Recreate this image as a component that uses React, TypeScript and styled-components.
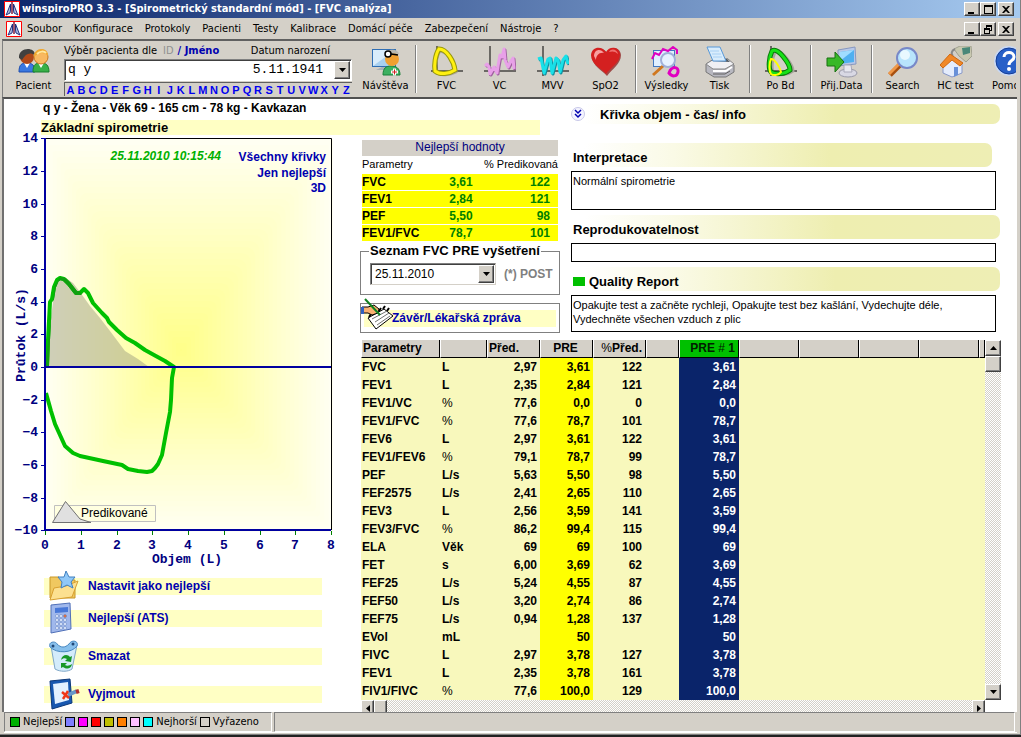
import React from "react";
import styled, { createGlobalStyle, css } from "styled-components";

const sans = `"Liberation Sans", Arial, sans-serif`;
const ui = `"DejaVu Sans Condensed", Tahoma, "DejaVu Sans", sans-serif`;
const mono = `"Liberation Mono", "Courier New", monospace`;
const face = "#d4d0c8";
const link = "#0000b0";

const GlobalStyle = createGlobalStyle`
  *, *::before, *::after { box-sizing: border-box; }
  body { margin: 0; background: #222; font: 12px/14px ${sans}; color: #000; }
  button, input, textarea, select { font: inherit; color: inherit; margin: 0; }
  button { cursor: pointer; }
`;

const raised = css`
  border: 1px solid;
  border-color: #fff #404040 #404040 #fff;
  box-shadow: inset -1px -1px 0 #808080;
  background: ${face};
`;

const Window = styled.div`
  display: flex;
  flex-direction: column;
  min-height: calc(100vh - 2px);
  background: ${face};
  border-right: 1px solid #808080;
  border-bottom: 1px solid #808080;
`;

const TitleBar = styled.header`
  display: flex;
  align-items: center;
  gap: 2px;
  height: 18px;
  padding: 0 6px 0 4px;
  background: linear-gradient(90deg, #0a246a, #a6caf0);
  color: #fff;
`;

const Title = styled.h1`
  flex: 1;
  margin: 0;
  font: bold 11px/14px ${ui};
  white-space: nowrap;
`;

const MenuBar = styled.nav`
  display: flex;
  align-items: center;
  height: 21px;
  padding: 0 6px;
  font: 11px/14px ${ui};
`;

const MenuList = styled.div`
  display: flex;
  flex: 1;
  gap: 12px;
  padding-left: 5px;
`;

const MenuItem = styled.button`
  border: 0;
  padding: 0;
  background: none;
  white-space: nowrap;
`;

const WindowButtons = styled.div`
  display: flex;
`;

const WindowButton = styled.button<{ $apart?: boolean }>`
  ${raised}
  width: 16px;
  height: 14px;
  padding: 0;
  margin-left: ${(p) => (p.$apart ? 2 : 0)}px;
  display: flex;
  color: #000;
`;

const Toolbar = styled.div`
  display: flex;
  height: 58px;
  margin: 0 4px 0 2px;
  padding-left: 4px;
  border-top: 2px solid #606060;
  border-left: 1px solid #808080;
  overflow: hidden;
  font: 11px/14px ${ui};
`;

const ToolButton = styled.button`
  display: flex;
  flex: none;
  flex-direction: column;
  align-items: center;
  gap: 1px;
  width: 53px;
  padding: 5px 0 0;
  border: 0;
  background: none;
  white-space: nowrap;
`;

const Separator = styled.span`
  flex: none;
  width: 2px;
  height: 48px;
  margin: 4px 3px;
  border-left: 1px solid #808080;
  border-right: 1px solid #fff;
`;

const PatientPicker = styled.div`
  flex: none;
  width: 288px;
  margin: 2px 7px 0 4px;
`;

const PickerLabels = styled.div`
  display: flex;
  height: 16px;
  align-items: center;
  white-space: nowrap;
`;

const PickerMode = styled.button<{ $active?: boolean }>`
  border: 0;
  padding: 0;
  background: none;
  margin-left: ${(p) => (p.$active ? 4 : 6)}px;
  color: ${(p) => (p.$active ? link : "#909090")};
  font-weight: ${(p) => (p.$active ? "bold" : "normal")};
`;

const BirthLabel = styled.label`
  margin-left: auto;
  padding-right: 22px;
`;

const Combo = styled.div`
  display: flex;
  height: 22px;
  padding: 1px;
  border: 1px solid;
  border-color: #808080 #fff #fff #808080;
  box-shadow: inset 1px 1px 0 #404040;
  background: #fff;
`;

const ComboInput = styled.input<{ $right?: boolean }>`
  flex: 1;
  min-width: 0;
  border: 0;
  outline: 0;
  padding: 0 11px 0 2px;
  background: transparent;
  font: 13px/18px ${mono};
  text-align: ${(p) => (p.$right ? "right" : "left")};
`;

const ArrowButton = styled.button`
  ${raised}
  flex: none;
  display: flex;
  align-items: center;
  justify-content: center;
  width: 16px;
  height: 100%;
  padding: 0;
`;

const SelectArrow = styled.span`
  ${raised}
  flex: none;
  display: flex;
  align-items: center;
  justify-content: center;
  width: 16px;
  pointer-events: none;
`;

const Letters = styled.div`
  display: flex;
  height: 14px;
  margin-top: 1px;
  border-top: 1px solid #606060;
  border-left: 1px solid #606060;
`;

const Letter = styled.button`
  flex: 1;
  padding: 0;
  border: 0;
  background: none;
  color: #0000f0;
  font: bold 11px/12px ${sans};
`;

const Content = styled.main`
  flex: 1;
  display: grid;
  grid-template-columns: 356px 204px minmax(0, 1fr);
  grid-template-rows: 37px 205px 1fr;
  margin: 0 3px 0 2px;
  border-top: 2px solid #505050;
  border-left: 2px solid #707070;
  background: #fff;
`;

const Heading = styled.div`
  grid-column: 1 / 3;
  padding: 2px 24px 0 37px;
`;

const PatientLine = styled.p`
  margin: 0;
  padding-left: 2px;
  font: bold 12px/14px ${sans};
  height: 19px;
`;

const Band = styled.h2`
  margin: 0;
  height: 15px;
  background: #ffffc4;
  font: bold 13px/16px ${sans};
`;

const Left = styled.section`
  grid-column: 1;
  grid-row: 2 / 4;
`;

const ChartArea = styled.svg`
  display: block;
  overflow: visible;
`;

const Actions = styled.div`
  display: flex;
  flex-direction: column;
  padding: 4px 38px 0 40px;
`;

const Action = styled.button<{ $spaced?: boolean }>`
  display: flex;
  align-items: center;
  gap: 8px;
  height: 32px;
  margin-top: ${(p) => (p.$spaced ? 6 : 0)}px;
  padding: 0 0 0 4px;
  border: 0;
  background: linear-gradient(#ffffc4, #ffffc4) center / 100% 17px no-repeat;
  color: ${link};
  font: bold 12px/14px ${sans};
`;

const Center = styled.section`
  padding: 4px 5px 0 0;
`;

const BestTable = styled.table`
  width: 196px;
  margin-left: 2px;
  border-collapse: collapse;
  table-layout: fixed;

  caption { height: 16px; background: ${face}; color: #000080; font: 12px/15px ${sans}; }
  th { height: 17px; padding: 0; font: 11px/16px ${sans}; text-align: left; white-space: nowrap; }
  tbody th { width: 60px; font: bold 12px/16px ${sans}; }
  td { padding: 0; color: #008000; font: bold 12px/16px ${sans}; text-align: right; }
  tbody tr { height: 17px; background: #ff0; border-top: 1px solid #fff; }
  thead th:last-child { text-align: right; }
  tbody td:nth-child(2) { padding-right: 20px; }
  tbody td:last-child { padding-right: 8px; }
`;

const ExamBox = styled.fieldset`
  width: 200px;
  height: 51px;
  margin: 3px 0 0;
  padding: 5px 0 0 9px;
  border: 1px solid #808080;
  display: flex;

  legend { margin-left: -1px; padding: 0 1px; font: bold 13px/14px ${sans}; white-space: nowrap; }
`;

const ExamRow = styled.div`
  display: flex;
  align-items: center;
  gap: 8px;
  height: 22px;
`;

const SelectWrap = styled.div`
  display: flex;
  width: 126px;
  height: 22px;
  padding: 1px;
  border: 1px solid;
  border-color: #808080 #d4d0c8 #d4d0c8 #808080;
  box-shadow: inset 1px 1px 0 #404040;
`;

const Select = styled.select`
  flex: 1;
  min-width: 0;
  appearance: none;
  border: 0;
  padding: 0 0 0 3px;
  background: transparent;
  font: 12px/18px ${sans};
`;

const PostLabel = styled.span`
  color: #808080;
  font: bold 12px/14px ${sans};
`;

const ReportButton = styled.button`
  display: flex;
  align-items: center;
  width: 200px;
  height: 30px;
  margin-top: 8px;
  padding: 0 3px 0 0;
  border: 1px solid #808080;
  background: linear-gradient(#ffffc4, #ffffc4) center / calc(100% - 6px) 17px no-repeat #fff;
  color: ${link};
  font: bold 12px/14px ${sans};

  svg { flex: none; margin: -8px -1px 0 0; }
`;

const Right = styled.section`
  grid-column: 3;
  grid-row: 1 / 3;
  padding: 5px 21px 0 7px;
`;

const SectionHead = styled.h2<{ $intro?: boolean; $short?: boolean }>`
  display: flex;
  align-items: center;
  gap: ${(p) => (p.$intro ? 15 : 4)}px;
  height: ${(p) => (p.$intro ? 20 : 24)}px;
  margin: 0 ${(p) => (p.$short ? 4 : -4)}px ${(p) => (p.$intro ? 19 : 4)}px -4px;
  padding: ${(p) => (p.$intro ? "0" : "4px 0 0 6px")};
  border-radius: 0 7px 7px 0;
  background: linear-gradient(90deg, #fff 4%, #fafae6 25%, #eeeeb0 62%, #eeeeb4);
  font: bold 13px/15px ${sans};
`;

const RoundButton = styled.button`
  width: 14px;
  height: 16px;
  margin-left: 4px;
  padding: 0;
  border: 0;
  background: none;
  display: flex;
`;

const Flag = styled.span`
  width: 12px;
  height: 9px;
  background: #00c000;
`;

const Note = styled.textarea<{ $h: number }>`
  display: block;
  width: 100%;
  height: ${(p) => p.$h}px;
  margin-bottom: 5px;
  padding: 2px 1px;
  border: 1px solid #000;
  border-radius: 0;
  outline: 0;
  background: #fff;
  resize: none;
  overflow: hidden;
  font: 11px/14px ${sans};
`;

const GridBox = styled.section`
  grid-column: 2 / 4;
  display: grid;
  grid-template-columns: minmax(0, 1fr) 16px;
  grid-template-rows: 360px 12px;
  margin: -1px 16px 0 1px;
`;

const Results = styled.table`
  width: 100%;
  table-layout: fixed;
  border-collapse: separate;
  border-spacing: 0;
  background: #f8f8bc;
  font: bold 12px/17px ${sans};

  th, td { height: 18px; padding: 0 3px 0 1px; white-space: nowrap; overflow: hidden; }
  td { text-align: right; }
  tbody th { text-align: left; }
  thead th {
    background: ${face};
    border-bottom: 1px solid #000;
    border-right: 1px solid #000;
    border-left: 1px solid #fff;
  }
`;

const HeadCell = styled.th<{ $align?: string; $live?: boolean }>`
  && { text-align: ${(p) => p.$align || "left"}; }
  ${(p) => p.$live && css`&& { background: #00c000; color: #002000; }`}
`;

const Light = styled.span`
  font-weight: normal;
`;

const Unit = styled.td<{ $light?: boolean }>`
  && {
    text-align: left;
    padding-left: 2px;
    font-weight: ${(p) => (p.$light ? "normal" : "bold")};
  }
`;

const Best = styled.td`
  background: #ff0;
`;

const Percent = styled.td`
  && { padding-right: 4px; }
`;

const Chosen = styled.td`
  background: #0a246a;
  color: #fff;
`;

const Track = styled.div<{ $row?: boolean }>`
  display: flex;
  flex-direction: ${(p) => (p.$row ? "row" : "column")};
  background: repeating-conic-gradient(#fff 0 25%, #d4d0c8 0 50%) 0 0 / 2px 2px;
  overflow: hidden;

  button { width: ${(p) => (p.$row ? 13 : 16)}px; height: 16px; }
`;

const Thumb = styled.button`
  ${raised}
  padding: 0;
`;

const Grow = styled.span`
  flex: 1;
`;

const StatusBar = styled.footer`
  display: flex;
  height: 21px;
  margin: 0 3px 1px 4px;
  border-bottom: 1px solid #fff;
`;

const StatusPanel = styled.div<{ $fill?: boolean }>`
  flex: ${(p) => (p.$fill ? "1" : "none")};
  display: flex;
  align-items: center;
  width: ${(p) => (p.$fill ? "auto" : "268px")};
  margin-right: 2px;
  padding-left: 5px;
  border: 1px solid;
  border-color: #808080 #fff #fff #808080;
  font: 11px/14px ${ui};
`;

const Swatch = styled.i<{ $c: string }>`
  flex: none;
  width: 10px;
  height: 10px;
  margin-right: 3px;
  border: 1px solid #000;
  background: ${(p) => p.$c};
`;

const SwatchLabel = styled.span`
  margin-right: 3px;
`;

const Down = () => (
  <svg width="7" height="4"><path d="M0 0h7L3.500 4z" /></svg>
);

const Logo = () => (
  <svg width="16" height="16" viewBox="0 0 16 16">
    <path d="M.5.5h15v15H.5z" fill="#fff" stroke="#f00" />
    <path d="M8 1v12" stroke="#802040" strokeWidth="1.500" />
    <path d="M6.500 3L3 12l-1 2 4-2 .5-3zM9.500 3l3.500 9 1 2-4-2-.5-3z" fill="#b0c0e0" stroke="#203080" />
  </svg>
);

const glyphs: Record<string, string> = {
  min: "M3 9h6v2H3z",
  max: "M3 2h9v9H3zM4 4v6h7V4z",
  restore: "M5 2h6v6H9v3H3V5h2zM6 4v1h3v2h1V4zM4 7v3h4V7z",
  close: "M3 3h2l2 2 2-2h2L8 6.500 11 10H9L7 8l-2 2H3l3-3.500z",
};

const Controls = ({ mid, scope }: { mid: "max" | "restore"; scope: string }) => (
  <WindowButtons>
    {(["min", mid, "close"] as const).map((k) => (
      <WindowButton key={k} $apart={k === "close"} aria-label={`${scope} ${k}`}>
        <svg width="14" height="12" viewBox="0 0 14 12"><path d={glyphs[k]} fillRule="evenodd" /></svg>
      </WindowButton>
    ))}
  </WindowButtons>
);

const shadow = { fill: "none", stroke: "#a8a49c", strokeWidth: 3 };
const vcWave = "M1 20L3 18 5 21 6 28 10 21 13 27 14 20 16 9 18 11 20 3 21 14 24 21 27 15 29 12 30 23";
const mvvWave = "M1 13L4 12 7 27 11 13 13 12 15 27 19 12 21 14 23 26 26 14 29 10 31 18";
const pobdLoop = "M7 5c-3 6-4 18-1 21 5 3 14 2 19-2 0-6-12-23-18-19z";

const icons: Record<string, React.ReactNode> = {
  people: (
    <>
      <path d="M1 26c0-8 3-9 8-9s8 2 8 9z" fill="#3a78e0" stroke="#1c4cae" />
      <path d="M6 17l3 5 3-5z" fill="#fff" />
      <circle cx="9" cy="11" r="7" fill="#b04818" />
      <path d="M1 12C0 1 17 0 17 9 12 6 8 7 4 14z" fill="#404040" />
      <path d="M15 26c0-8 3-9 8-9s8 2 8 9z" fill="#38b048" stroke="#18802c" />
      <path d="M20 17l3 5 3-5z" fill="#fff" />
      <circle cx="23" cy="11" r="7" fill="#f8b860" stroke="#c87820" />
      <path d="M16 11C15 1 31 0 30 10 26 6 21 6 16 11z" fill="#f0a830" />
      <path d="M19 8c3-3 7-3 9-1" stroke="#ffe8a0" fill="none" strokeWidth="2" />
    </>
  ),
  visit: (
    <>
      <path d="M2 3h24v18H2z" fill="#2f6eb4" />
      <path d="M3 4h22v16H3z" fill="#d8ecfb" />
      <path d="M3 20L25 4v16z" fill="#a8d0f0" />
      <path d="M6 24h14l-4-3h-4z" fill="#a8b0b8" />
      <path d="M13 29c0-7 3-9 8-9s9 2 9 9z" fill="#3cb060" stroke="#188038" />
      <circle cx="22" cy="13" r="7" fill="#f0a030" />
      <path d="M15 11C14 2 28 2 29 8c-5-1-8-1-14 3z" fill="#b8b8b0" />
      <circle cx="18" cy="8" r="3" fill="#fff" stroke="#000" strokeWidth="1.500" />
      <path d="M21 8l7 1" stroke="#000" strokeWidth="1.500" />
      <path d="M21 26h7M24.500 22.500v7" stroke="#fff" strokeWidth="3" />
      <path d="M22 26h5M24.500 23.500v5" stroke="#d02020" />
    </>
  ),
  fvc: (
    <>
      <path d="M6 0v29M0 25h32" stroke="#000" />
      <path d="M9 5c-4 6-5 17-4 22 5 3 14 2 20-1-1-8-8-20-16-21z" {...shadow} />
      <path d="M8 3c-4 6-5 17-4 22 5 4 14 3 20-1-1-8-8-21-16-21z" fill="none" stroke="#98980c" strokeWidth="5" />
      <path d="M8 3c-4 6-5 17-4 22 5 4 14 3 20-1-1-8-8-21-16-21z" fill="none" stroke="#fff010" strokeWidth="3" />
    </>
  ),
  vc: (
    <>
      <path d="M6 0v30M0 25h32" stroke="#000" />
      <path d={vcWave} transform="translate(1 1)" fill="none" stroke="#a060a0" strokeWidth="3" strokeLinejoin="round" />
      <path d={vcWave} fill="none" stroke="#e8a0e8" strokeWidth="3" strokeLinejoin="round" />
    </>
  ),
  mvv: (
    <>
      <path d="M6 0v30M0 25h32" stroke="#000" />
      <path d={mvvWave} transform="translate(1 1)" fill="none" stroke="#1090a0" strokeWidth="3" strokeLinejoin="round" />
      <path d={mvvWave} fill="none" stroke="#18e0e8" strokeWidth="3" strokeLinejoin="round" />
    </>
  ),
  heart: (
    <>
      <path d="M17 30C12 24 2 20 2 10 3 1 13 0 17 7 20 0 30 0 31 9c0 9-9 14-14 21z" fill="#8a1010" opacity=".7" />
      <path d="M16 28C11 22 1 18 1 9 2 0 12 0 16 6 19 0 29 0 30 8c0 9-9 13-14 20z" fill="#d42020" />
      <path d="M4 10C4 3 11 2 14 7 9 6 6 10 6 14z" fill="#f8a0a0" />
      <path d="M19 6c2-4 8-3 9 2-3-3-6-3-9-2z" fill="#f07070" />
    </>
  ),
  results: (
    <>
      <path d="M2 4h22v17H2z" fill="#4078c0" />
      <path d="M3 5h20v15H3z" fill="#e0f0ff" />
      <path d="M1 13l3-6 4 2 4-6 5 2 5-4 4 3 0 4" fill="none" stroke="#e000c0" strokeWidth="2" />
      <path d="M18 27c3-8 10-6 9-1s-6 5-9 1z" fill="none" stroke="#e000c0" strokeWidth="3" />
      <path d="M2 29l10-9" stroke="#d07820" strokeWidth="3" />
      <circle cx="17" cy="14" r="7" fill="#e8f2ff" fillOpacity=".85" stroke="#a0b0d8" strokeWidth="2" />
    </>
  ),
  printer: (
    <>
      <path d="M2 18l8-5h14l6 6v7l-8 5H10l-8-5z" fill="#b8b8c0" stroke="#777" />
      <path d="M2 18l8-5h14l6 5-9 5H9z" fill="#f0f0f4" stroke="#888" />
      <path d="M7 15l4-2h12l3 3z" fill="#505860" />
      <path d="M3 1h13l6 14H9z" fill="#d8ecfc" stroke="#5898d8" />
      <path d="M6 5h9M8 8h9M9 11h9" stroke="#a8d0f4" />
      <path d="M9 25h13l6-4" stroke="#fff" strokeWidth="2" fill="none" />
      <path d="M9 28h12l5-3" stroke="#606060" fill="none" />
    </>
  ),
  pobd: (
    <>
      <path d="M6 0v30M0 25h32" stroke="#000" />
      <path d={pobdLoop} transform="translate(3 1)" {...shadow} />
      <path d={pobdLoop} fill="none" stroke="#087808" strokeWidth="5" />
      <path d={pobdLoop} fill="none" stroke="#18e018" strokeWidth="3" />
      <path d="M6 13c3-1 9 8 10 13-2 3-7 4-10 2-2-3-2-11 0-15z" fill="none" stroke="#ff0" strokeWidth="2" />
    </>
  ),
  receive: (
    <>
      <path d="M12 4l17-3 1 17-18 2z" fill="#b8c8e8" stroke="#8898c0" />
      <path d="M14 6l14-2 0 12-14 2z" fill="#50b0f0" />
      <path d="M14 6l14-2-14 11z" fill="#a0dcff" />
      <ellipse cx="22" cy="27" rx="9" ry="4" fill="#d8d8e4" stroke="#9898a8" />
      <path d="M18 19h7l1 7h-8z" fill="#e8e8f0" stroke="#a8a8b8" />
      <path d="M1 12h8V6l9 10-9 10v-6H1z" fill="#38b828" stroke="#187010" />
    </>
  ),
  search: (
    <>
      <path d="M3 29l12-12" stroke="#a85010" strokeWidth="5" />
      <path d="M2 28l12-12" stroke="#f09848" strokeWidth="3" />
      <circle cx="20" cy="12" r="10" fill="#b8e4fc" stroke="#7888c8" strokeWidth="2" />
      <circle cx="18" cy="9" r="5" fill="#e8f8ff" />
    </>
  ),
  house: (
    <>
      <path d="M14 3l6-3h11l1 10-6 6-7-6z" fill="#c8c8b0" stroke="#a0a090" />
      <path d="M22 2l8-1 0 6-7 2z" fill="#488878" />
      <path d="M15 3c-4 2-4 5-2 7" stroke="#888" strokeWidth="2" fill="none" />
      <path d="M3 18v9l9 4 10-4V17l-10-7z" fill="#e4ecfc" stroke="#8898c8" />
      <path d="M0 19L10 8l13 9-3 3-8-6-9 8z" fill="#f08828" stroke="#d06810" />
      <path d="M14 21h4v8l-4 2z" fill="#6890d8" />
    </>
  ),
  help: (
    <>
      <circle cx="16" cy="15" r="15" fill="#c8d8f4" />
      <circle cx="16" cy="15" r="13" fill="#2860c8" stroke="#123c98" />
      <path d="M11 11c0-6 10-6 10 0 0 4-5 3-5 8" fill="none" stroke="#fff" strokeWidth="3" />
      <circle cx="16" cy="23" r="2" fill="#fff" />
    </>
  ),
  folder: (
    <>
      <path d="M2 7h9l2 3h14v18H2z" fill="#f0c860" stroke="#c89828" />
      <path d="M2 30l4-12 12-2 12-5-6 16z" fill="#fce090" stroke="#d8a030" />
      <path d="M18 1l3 6 6 0-4 5 2 6-6-3-6 3 1-6-4-5 6 0z" fill="#90c8f8" stroke="#4080c0" />
    </>
  ),
  calc: (
    <>
      <path d="M3 3l19-2 1 26-20 4z" fill="#a0b8ec" stroke="#5070b8" />
      <path d="M7 6l13-1v5L7 11z" fill="#4878d8" />
      {[14, 18, 22, 26].map((y) => [9, 13, 17].map((x) => (
        <circle key={`${x}-${y}`} cx={x} cy={y} r="1.500" fill={x === 17 && y === 14 ? "#f07030" : "#e8f0ff"} stroke="#5878b8" strokeWidth=".5" />
      )))}
    </>
  ),
  bin: (
    <>
      <path d="M3 6l4 23c5 3 13 3 17 0l5-24c-6 7-18 8-26 1z" fill="#d4ecfb" stroke="#80a8c8" />
      <path d="M2 7C0 1 8 1 9 4c4 4 8 4 12 0 3-5 10-3 8 2-5 7-20 8-27 1z" fill="#88c0ec" stroke="#4888c0" />
      <circle cx="5" cy="6" r="1.500" fill="#204878" />
      <circle cx="25" cy="4" r="1.500" fill="#204878" />
      <path d="M13 20c1-6 7-6 9-3l2-1-1 6-6-1 2-2c-2-1-4-1-6 1zM24 24c-1 6-7 5-9 3l-2 1v-5h6l-2 2c2 1 4 1 7-1z" fill="#189828" />
    </>
  ),
  remove: (
    <>
      <path d="M2 3l20-2 2 24L4 31z" fill="#1858b0" stroke="#0c3878" />
      <path d="M5 6l15-2 1 18L7 26z" fill="#e4f2ff" />
      <path d="M20 17l9-4" stroke="#6898c8" strokeWidth="4" />
      <path d="M28 14l3-1" stroke="#b03030" strokeWidth="4" />
      <path d="M14 14l7 6M20 13l-5 8" stroke="#f03818" strokeWidth="2.500" />
    </>
  ),
};

const Icon = ({ name, size = 32 }: { name: string; size?: number }) => (
  <svg width={size} height={size} viewBox="0 0 32 32">{icons[name]}</svg>
);

const Tool = ({ icon, label }: { icon: string; label: string }) => (
  <ToolButton>
    <Icon name={icon} />
    <span>{label}</span>
  </ToolButton>
);

const menus = ["Soubor", "Konfigurace", "Protokoly", "Pacienti", "Testy", "Kalibrace", "Domácí péče", "Zabezpečení", "Nástroje", "?"];

const px = (v: number) => 45 + v * 35.75;
const py = (v: number) => 367 - v * 16.333;

const predictedArea = "M45 367L52 310 55 285 60 277 66 278 73 283 80 292 90 306 100 318 110 331 125 351 138 359 149 367z";
const flowCurve = "M47 366L48 340 50 302 52 299 54 287 57 280 60 278 64 279 69 284 76 293 80 293 84 289 88 293 93 303 102 313 107 318 109 322 117 330 126 338 135 343 145 350 154 355 165 361 174 367 172 378 171 400 170 412 166 433 162 455 158 464 155 468 152 471 147 472 138 471 128 469 122 465 103 461 80 456 73 453 65 446 60 435 55 424 51 411 46 393";

const glow = Array.from({ length: 36 }, (_, i) => {
  const t = i / 35;
  const k = 1 - t;
  const blue = Math.round(242 - 106 * t);
  return (
    <rect
      key={i}
      x={45 + 135 * t}
      y={139 + 210 * t}
      width={286 * k + 2}
      height={391 * k + 2}
      rx={40 * t * k}
      fill={`rgb(255,255,${blue})`}
    />
  );
});

const Chart = () => (
  <ChartArea width="336" height="430" viewBox="4 136 336 430" role="img" aria-label="Průtok (L/s) / Objem (L)">
    <defs><clipPath id="predicted"><path d={predictedArea} /></clipPath></defs>
    {glow}
    <path d={predictedArea} fill="#a0a080" fillOpacity=".5" />
    <path d="M45 138.500H331.500V530" fill="none" stroke="#000" />
    <path d={flowCurve} fill="none" stroke="#00c000" strokeWidth="4" strokeLinejoin="round" />
    <path d={flowCurve} fill="none" stroke="#10a010" strokeWidth="4" strokeLinejoin="round" clipPath="url(#predicted)" />
    <path d="M44 367H331M45 138V530H331" fill="none" stroke="#0000a0" strokeWidth="2" />
    {Array.from({ length: 13 }, (_, i) => 14 - i * 2).map((v) => (
      <g key={v}>
        <path d={`M41 ${Math.round(py(v)) + 0.5}h4`} stroke="#0000a0" />
        <text x="38" y={Math.round(py(v)) + 4} textAnchor="end" fill="#000080" fontFamily={mono} fontWeight="bold" fontSize="13">
          {String(v).replace("-", "−")}
        </text>
      </g>
    ))}
    {Array.from({ length: 9 }, (_, v) => (
      <g key={v}>
        <path d={`M${Math.round(px(v)) + 0.5} 531v4`} stroke="#008000" />
        <text x={Math.round(px(v))} y="549" textAnchor="middle" fill="#000080" fontFamily={mono} fontWeight="bold" fontSize="13">{v}</text>
      </g>
    ))}
    <text x="187" y="563" textAnchor="middle" fill="#000080" fontFamily={mono} fontWeight="bold" fontSize="13">Objem (L)</text>
    <text transform="translate(25 335) rotate(-90)" textAnchor="middle" fill="#000080" fontFamily={mono} fontWeight="bold" fontSize="13">Průtok (L/s)</text>
    <g fontFamily={sans} fontWeight="bold" fontSize="12" textAnchor="end">
      <text x="221" y="160" fill="#00b000" fontStyle="italic">25.11.2010 10:15:44</text>
      <text x="326" y="161" fill={link}>Všechny křivky</text>
      <text x="326" y="177" fill={link}>Jen nejlepší</text>
      <text x="326" y="192" fill={link}>3D</text>
    </g>
    <path d="M54.500 505.500h101v16h-101z" fill="#ffffe0" stroke="#c0c0c0" />
    <path d="M52.500 522.500L65.500 501.500 80 519 91 522.500z" fill="#e0e0e0" stroke="#707070" />
    <text x="81" y="517" fontFamily={sans} fontSize="12">Predikované</text>
  </ChartArea>
);

const best = [["FVC", "3,61", "122"], ["FEV1", "2,84", "121"], ["PEF", "5,50", "98"], ["FEV1/FVC", "78,7", "101"]];

const rows = [
  ["FVC", "L", "2,97", "3,61", "122"],
  ["FEV1", "L", "2,35", "2,84", "121"],
  ["FEV1/VC", "%", "77,6", "0,0", "0"],
  ["FEV1/FVC", "%", "77,6", "78,7", "101"],
  ["FEV6", "L", "2,97", "3,61", "122"],
  ["FEV1/FEV6", "%", "79,1", "78,7", "99"],
  ["PEF", "L/s", "5,63", "5,50", "98"],
  ["FEF2575", "L/s", "2,41", "2,65", "110"],
  ["FEV3", "L", "2,56", "3,59", "141"],
  ["FEV3/FVC", "%", "86,2", "99,4", "115"],
  ["ELA", "Věk", "69", "69", "100"],
  ["FET", "s", "6,00", "3,69", "62"],
  ["FEF25", "L/s", "5,24", "4,55", "87"],
  ["FEF50", "L/s", "3,20", "2,74", "86"],
  ["FEF75", "L/s", "0,94", "1,28", "137"],
  ["EVol", "mL", "", "50", ""],
  ["FIVC", "L", "2,97", "3,78", "127"],
  ["FEV1", "L", "2,35", "3,78", "161"],
  ["FIV1/FIVC", "%", "77,6", "100,0", "129"],
];

const columnWidths = [79, 47, 53, 53, 53, 33, 60, 60, 60, 60, 60];

export default function App() {
  return (
    <>
      <GlobalStyle />
      <Window>
        <TitleBar>
          <Logo />
          <Title>winspiroPRO 3.3 - [Spirometrický standardní mód] - [FVC analýza]</Title>
          <Controls mid="max" scope="window" />
        </TitleBar>
        <MenuBar>
          <Logo />
          <MenuList>{menus.map((m) => <MenuItem key={m}>{m}</MenuItem>)}</MenuList>
          <Controls mid="restore" scope="document" />
        </MenuBar>
        <Toolbar>
          <Tool icon="people" label="Pacient" />
          <PatientPicker>
            <PickerLabels>
              <label htmlFor="patient">Výběr pacienta dle</label>
              <PickerMode>ID</PickerMode>
              <PickerMode $active>/ Jméno</PickerMode>
              <BirthLabel htmlFor="birth">Datum narození</BirthLabel>
            </PickerLabels>
            <Combo>
              <ComboInput id="patient" defaultValue="q y" />
              <ComboInput id="birth" $right defaultValue="5.11.1941" />
              <ArrowButton aria-label="Pacienti"><Down /></ArrowButton>
            </Combo>
            <Letters>{"ABCDEFGHIJKLMNOPQRSTUVWXYZ".split("").map((c) => <Letter key={c}>{c}</Letter>)}</Letters>
          </PatientPicker>
          <Tool icon="visit" label="Návštěva" />
          <Separator />
          <Tool icon="fvc" label="FVC" />
          <Tool icon="vc" label="VC" />
          <Tool icon="mvv" label="MVV" />
          <Tool icon="heart" label="SpO2" />
          <Separator />
          <Tool icon="results" label="Výsledky" />
          <Tool icon="printer" label="Tisk" />
          <Separator />
          <Tool icon="pobd" label="Po Bd" />
          <Separator />
          <Tool icon="receive" label="Přij.Data" />
          <Separator />
          <Tool icon="search" label="Search" />
          <Tool icon="house" label="HC test" />
          <Tool icon="help" label="Pomoc" />
        </Toolbar>

        <Content>
          <Heading>
            <PatientLine>q y - Žena - Věk 69 - 165 cm - 78 kg - Kavkazan</PatientLine>
            <Band>Základní spirometrie</Band>
          </Heading>

          <Left>
            <Chart />
            <Actions>
              <Action><Icon name="folder" />Nastavit jako nejlepší</Action>
              <Action><Icon name="calc" />Nejlepší (ATS)</Action>
              <Action $spaced><Icon name="bin" />Smazat</Action>
              <Action $spaced><Icon name="remove" />Vyjmout</Action>
            </Actions>
          </Left>

          <Center>
            <BestTable>
              <caption>Nejlepší hodnoty</caption>
              <thead>
                <tr><th>Parametry</th><th colSpan={2}>% Predikovaná</th></tr>
              </thead>
              <tbody>
                {best.map(([name, value, pct]) => (
                  <tr key={name}><th scope="row">{name}</th><td>{value}</td><td>{pct}</td></tr>
                ))}
              </tbody>
            </BestTable>
            <ExamBox>
              <legend>Seznam FVC PRE vyšetření</legend>
              <ExamRow>
                <SelectWrap>
                  <Select aria-label="Seznam FVC PRE vyšetření"><option>25.11.2010</option></Select>
                  <SelectArrow><Down /></SelectArrow>
                </SelectWrap>
                <PostLabel>(*) POST</PostLabel>
              </ExamRow>
            </ExamBox>
            <ReportButton>
              <svg width="32" height="32" viewBox="0 0 32 32">
                <path d="M7 20l16-9 9 7-17 13z" fill="#fff" stroke="#000" />
                <path d="M11 21l15-8M14 24l14-9M16 27l13-9" stroke="#707070" />
                <path d="M18 13l2-3M22 11l2-3M26 13l2-3M8 19l2-3" stroke="#000" strokeWidth="2" />
                <path d="M1 9h6l6-2 5 4-1 4-6 2-4-2H1z" fill="#f8b070" stroke="#000" />
                <path d="M0 9h3v7H0z" fill="#3060c0" />
                <path d="M4 1l15 16" stroke="#108020" strokeWidth="2" />
              </svg>
              Závěr/Lékařská zpráva
            </ReportButton>
          </Center>

          <Right>
            <SectionHead $intro>
              <RoundButton aria-label="Rozbalit">
                <svg width="14" height="16" viewBox="0 0 14 16">
                  <circle cx="7" cy="8" r="6.500" fill="#f4f4ff" stroke="#c8c8e8" />
                  <path d="M4 4l3 3 3-3M4 8l3 3 3-3" fill="none" stroke="#0000b0" strokeWidth="1.500" />
                </svg>
              </RoundButton>
              Křivka objem - čas/ info
            </SectionHead>
            <SectionHead id="interpretation" $short>Interpretace</SectionHead>
            <Note $h={39} readOnly aria-labelledby="interpretation" defaultValue="Normální spirometrie" />
            <SectionHead id="repeatability">Reprodukovatelnost</SectionHead>
            <Note $h={19} readOnly aria-labelledby="repeatability" />
            <SectionHead id="quality"><Flag />Quality Report</SectionHead>
            <Note
              $h={37}
              readOnly
              aria-labelledby="quality"
              defaultValue={"Opakujte test a začněte rychleji, Opakujte test bez kašlání, Vydechujte déle,\nVydechněte všechen vzduch z plic"}
            />
          </Right>

          <GridBox>
            <Results>
              <colgroup>
                {columnWidths.map((w, i) => <col key={i} width={w} />)}
                <col />
              </colgroup>
              <thead>
                <tr>
                  <HeadCell>Parametry</HeadCell>
                  <HeadCell />
                  <HeadCell>Před.</HeadCell>
                  <HeadCell $align="center">PRE</HeadCell>
                  <HeadCell $align="right"><Light>%</Light>Před.</HeadCell>
                  <HeadCell />
                  <HeadCell $align="right" $live>PRE <Light>#</Light> 1</HeadCell>
                  <HeadCell /><HeadCell /><HeadCell /><HeadCell /><HeadCell />
                </tr>
              </thead>
              <tbody>
                {rows.map(([name, unit, pred, pre, pct], i) => (
                  <tr key={i}>
                    <th scope="row">{name}</th>
                    <Unit $light={unit === "%"}>{unit}</Unit>
                    <td>{pred}</td>
                    <Best>{pre}</Best>
                    <Percent>{pct}</Percent>
                    <td />
                    <Chosen>{pre}</Chosen>
                    <td colSpan={5} />
                  </tr>
                ))}
              </tbody>
            </Results>
            <Track>
              <ArrowButton aria-label="Nahoru"><svg width="7" height="4"><path d="M0 4h7L3.500 0z" /></svg></ArrowButton>
              <Thumb aria-label="Posuvník" />
              <Grow />
              <ArrowButton aria-label="Dolů"><Down /></ArrowButton>
            </Track>
            <Track $row>
              <ArrowButton aria-label="Vlevo"><svg width="4" height="7"><path d="M4 0v7L0 3.500z" /></svg></ArrowButton>
              <Thumb aria-label="Vodorovný posuvník" />
              <Grow />
              <ArrowButton aria-label="Vpravo"><svg width="4" height="7"><path d="M0 0v7l4-3.500z" /></svg></ArrowButton>
            </Track>
          </GridBox>
        </Content>

        <StatusBar>
          <StatusPanel>
            <Swatch $c="#00b000" /><SwatchLabel>Nejlepší</SwatchLabel>
            {["#8080ff", "#ff00ff", "#ff0000", "#c0c000", "#ff8000", "#ffc0ff", "#00ffff"].map((c) => <Swatch key={c} $c={c} />)}
            <SwatchLabel>Nejhorší</SwatchLabel>
            <Swatch $c={face} /><SwatchLabel>Vyřazeno</SwatchLabel>
          </StatusPanel>
          <StatusPanel $fill />
        </StatusBar>
      </Window>
    </>
  );
}
